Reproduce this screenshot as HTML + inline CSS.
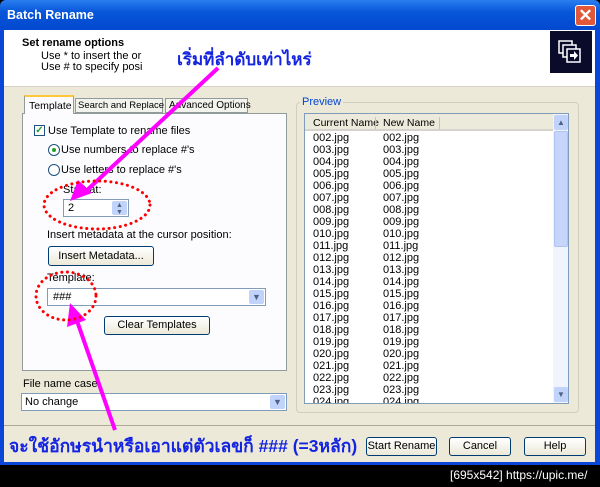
<!DOCTYPE html>
<html><head><meta charset="utf-8"><style>
*{margin:0;padding:0;box-sizing:border-box}
body{width:600px;height:487px;background:#000;position:relative;overflow:hidden;font-family:"Liberation Sans",sans-serif;font-size:11px;color:#000}
.a{position:absolute}
.win{left:0;top:0;width:600px;height:465px;background:#0a46d8;border-radius:6px 6px 0 0}
.title{left:0;top:0;width:600px;height:30px;background:linear-gradient(#2a7df0,#0756d9 40%,#0348d0);border-radius:6px 6px 0 0;color:#fff;font-weight:bold;font-size:12.5px;padding:8px 0 0 7px}
.body{left:4px;top:30px;width:591px;height:432px;background:#ece9d8}
.head{left:4px;top:30px;width:591px;height:57px;background:#fff;border-bottom:1px solid #d4d0c8}
.btn{border:1px solid #003c74;border-radius:3px;background:linear-gradient(#fff,#ece9d8);text-align:center;font-size:11px}
.tx{white-space:nowrap}
.combo{background:#fff;border:1px solid #7f9db9}
.dd{position:absolute;right:1px;top:1px;width:15px;bottom:1px;background:#c1d3fb;border-radius:2px;color:#4d6185;font-size:9px;text-align:center}
.row{position:absolute;left:8px;height:12px;line-height:12px;font-size:11px}
</style></head><body>
<div class="a win"></div>
<div class="a title">Batch Rename</div>
<div class="a" style="left:575px;top:5px;width:21px;height:21px;background:#e0573a;border:1px solid #fff;border-radius:3px;color:#fff;font-size:17px;font-weight:bold;text-align:center;line-height:19px">✕</div>
<div class="a body"></div>
<div class="a head"></div>
<div class="a tx" style="left:22px;top:37px;font-weight:bold;font-size:11px">Set rename options</div>
<div class="a tx" style="left:41px;top:50px">Use * to insert the or</div>
<div class="a tx" style="left:41px;top:61px">Use # to specify posi</div>
<div class="a" style="left:550px;top:31px;width:42px;height:42px;background:#0a0a2a"></div>
<svg class="a" style="left:555px;top:37px" width="32" height="32"><g fill="none" stroke="#fff" stroke-width="1.5"><rect x="4" y="4" width="13" height="12"/><rect x="8" y="8" width="13" height="12" fill="#0a0a2a"/><rect x="12" y="12" width="13" height="13" fill="#0a0a2a"/></g><path d="M15 17h4v-3l4 4.5-4 4.5v-3h-4z" fill="#fff"/></svg>

<div class="a" style="left:22px;top:113px;width:265px;height:258px;background:#fcfcfe;border:1px solid #919b9c"></div>
<div class="a tx" style="left:24px;top:95px;width:50px;height:19px;background:#fcfcfe;border:1px solid #919b9c;border-bottom:none;border-top:2px solid #ffc83c;padding:3px 0 0 4px;font-size:10.5px">Template</div>
<div class="a tx" style="left:75px;top:98px;width:88px;height:15px;background:#f3f3ee;border:1px solid #919b9c;padding:1px 0 0 2px;font-size:9.5px">Search and Replace</div>
<div class="a tx" style="left:165px;top:98px;width:83px;height:15px;background:#f3f3ee;border:1px solid #919b9c;padding:1px 0 0 3px;font-size:10px">Advanced Options</div>
<div class="a" style="left:34px;top:125px;width:11px;height:11px;border:1px solid #1c5180;background:#fff;color:#21a121;font-size:10px;line-height:9px;text-align:center;font-weight:bold">✓</div>
<div class="a tx" style="left:48px;top:125px">Use Template to rename files</div>
<div class="a" style="left:48px;top:144px;width:12px;height:12px;border:1px solid #1c5180;border-radius:50%;background:#fff"></div>
<div class="a" style="left:52px;top:148px;width:4px;height:4px;border-radius:50%;background:#21a121"></div>
<div class="a tx" style="left:61px;top:144px">Use numbers to replace #'s</div>
<div class="a" style="left:48px;top:164px;width:12px;height:12px;border:1px solid #1c5180;border-radius:50%;background:#fff"></div>
<div class="a tx" style="left:61px;top:164px">Use letters to replace #'s</div>
<div class="a tx" style="left:63px;top:184px">Start at:</div>
<div class="a combo" style="left:63px;top:199px;width:66px;height:18px;padding:2px 0 0 4px">2<div class="dd" style="font-size:7px;line-height:7px;padding-top:1px">▲<br>▼</div></div>
<div class="a tx" style="left:47px;top:229px">Insert metadata at the cursor position:</div>
<div class="a btn" style="left:48px;top:246px;width:106px;height:20px;line-height:18px">Insert Metadata...</div>
<div class="a tx" style="left:47px;top:272px">Template:</div>
<div class="a combo" style="left:47px;top:288px;width:219px;height:18px;padding:2px 0 0 5px">###<div class="dd" style="line-height:15px">▼</div></div>
<div class="a btn" style="left:104px;top:316px;width:106px;height:19px;line-height:17px">Clear Templates</div>
<div class="a tx" style="left:23px;top:378px">File name case:</div>
<div class="a combo" style="left:21px;top:393px;width:266px;height:18px;padding:2px 0 0 3px">No change<div class="dd" style="line-height:15px">▼</div></div>

<div class="a" style="left:296px;top:102px;width:283px;height:311px;border:1px solid #d0d0bf;border-radius:4px"></div>
<div class="a tx" style="left:300px;top:96px;background:#ece9d8;color:#0046d5;padding:0 2px">Preview</div>
<div class="a" style="left:304px;top:113px;width:265px;height:291px;background:#fff;border:1px solid #7f9db9;overflow:hidden">
<div class="a" style="left:0;top:0;width:248px;height:17px;background:#ebeadb;border-bottom:2px solid #d6d3ce"></div>
<div class="a tx" style="left:8px;top:3px;font-size:10.5px">Current Name</div>
<div class="a" style="left:70px;top:3px;width:1px;height:12px;background:#c7c5b2"></div>
<div class="a tx" style="left:78px;top:3px;font-size:10.5px">New Name</div>
<div class="a" style="left:134px;top:3px;width:1px;height:12px;background:#c7c5b2"></div>
<div class="a" style="left:248px;top:0;width:16px;height:290px;background:#f0f4fd"></div>
<div class="a" style="left:249px;top:1px;width:14px;height:15px;background:#c1d3fb;border-radius:2px;font-size:8px;text-align:center;color:#4d6185;line-height:15px">▲</div>
<div class="a" style="left:249px;top:17px;width:14px;height:116px;background:#c5d5fb;border:1px solid #aec3f0;border-radius:2px"></div>
<div class="a" style="left:249px;top:273px;width:14px;height:15px;background:#c1d3fb;border-radius:2px;font-size:8px;text-align:center;color:#4d6185;line-height:15px">▼</div>
<div id="rows"></div>
</div>

<div class="a" style="left:4px;top:425px;width:591px;height:1px;background:#aca899"></div>
<div class="a btn" style="left:366px;top:437px;width:71px;height:19px;line-height:17px">Start Rename</div>
<div class="a btn" style="left:449px;top:437px;width:62px;height:19px;line-height:17px">Cancel</div>
<div class="a btn" style="left:524px;top:437px;width:62px;height:19px;line-height:17px">Help</div>

<div class="a tx" style="left:177px;top:46px;color:#1424e0;font-weight:bold;font-size:17px;font-family:'Liberation Sans','Noto Sans CJK SC',sans-serif">เริ่มที่ลำดับเท่าไหร่</div>
<div class="a tx" style="left:9px;top:432px;color:#1424e0;font-weight:bold;font-size:17.5px;font-family:'Liberation Sans','Noto Sans CJK SC',sans-serif">จะใช้อักษรนำหรือเอาแต่ตัวเลขก็ ### (=3หลัก)</div>
<div class="a tx" style="left:450px;top:468px;color:#fff;font-size:12px;font-family:'Liberation Sans Narrow','Liberation Sans',sans-serif">[695x542] https://upic.me/</div>

<svg class="a" style="left:0;top:0" width="600" height="487">
<g fill="#ff00ff" stroke="#ff00ff" stroke-width="4">
<line x1="218" y1="68" x2="84" y2="193"/>
<line x1="115" y1="430" x2="76" y2="318"/>
</g>
<polygon points="70,201 78,180 92,193" fill="#ff00ff"/>
<polygon points="70,303 67,327 86,320" fill="#ff00ff"/>
<g fill="none" stroke="#f00" stroke-width="3" stroke-dasharray="0.1 5.5" stroke-linecap="round">
<ellipse cx="97" cy="205" rx="53" ry="24"/>
<ellipse cx="66" cy="296" rx="30" ry="24"/>
</g>
</svg>
<script>
var h='';for(var i=2;i<=24;i++){var n=('00'+i).slice(-3)+'.jpg';var t=18+(i-2)*12;h+='<div class="row tx" style="top:'+t+'px">'+n+'</div><div class="row tx" style="left:78px;top:'+t+'px">'+n+'</div>';}document.getElementById('rows').innerHTML=h;
</script>
</body></html>
